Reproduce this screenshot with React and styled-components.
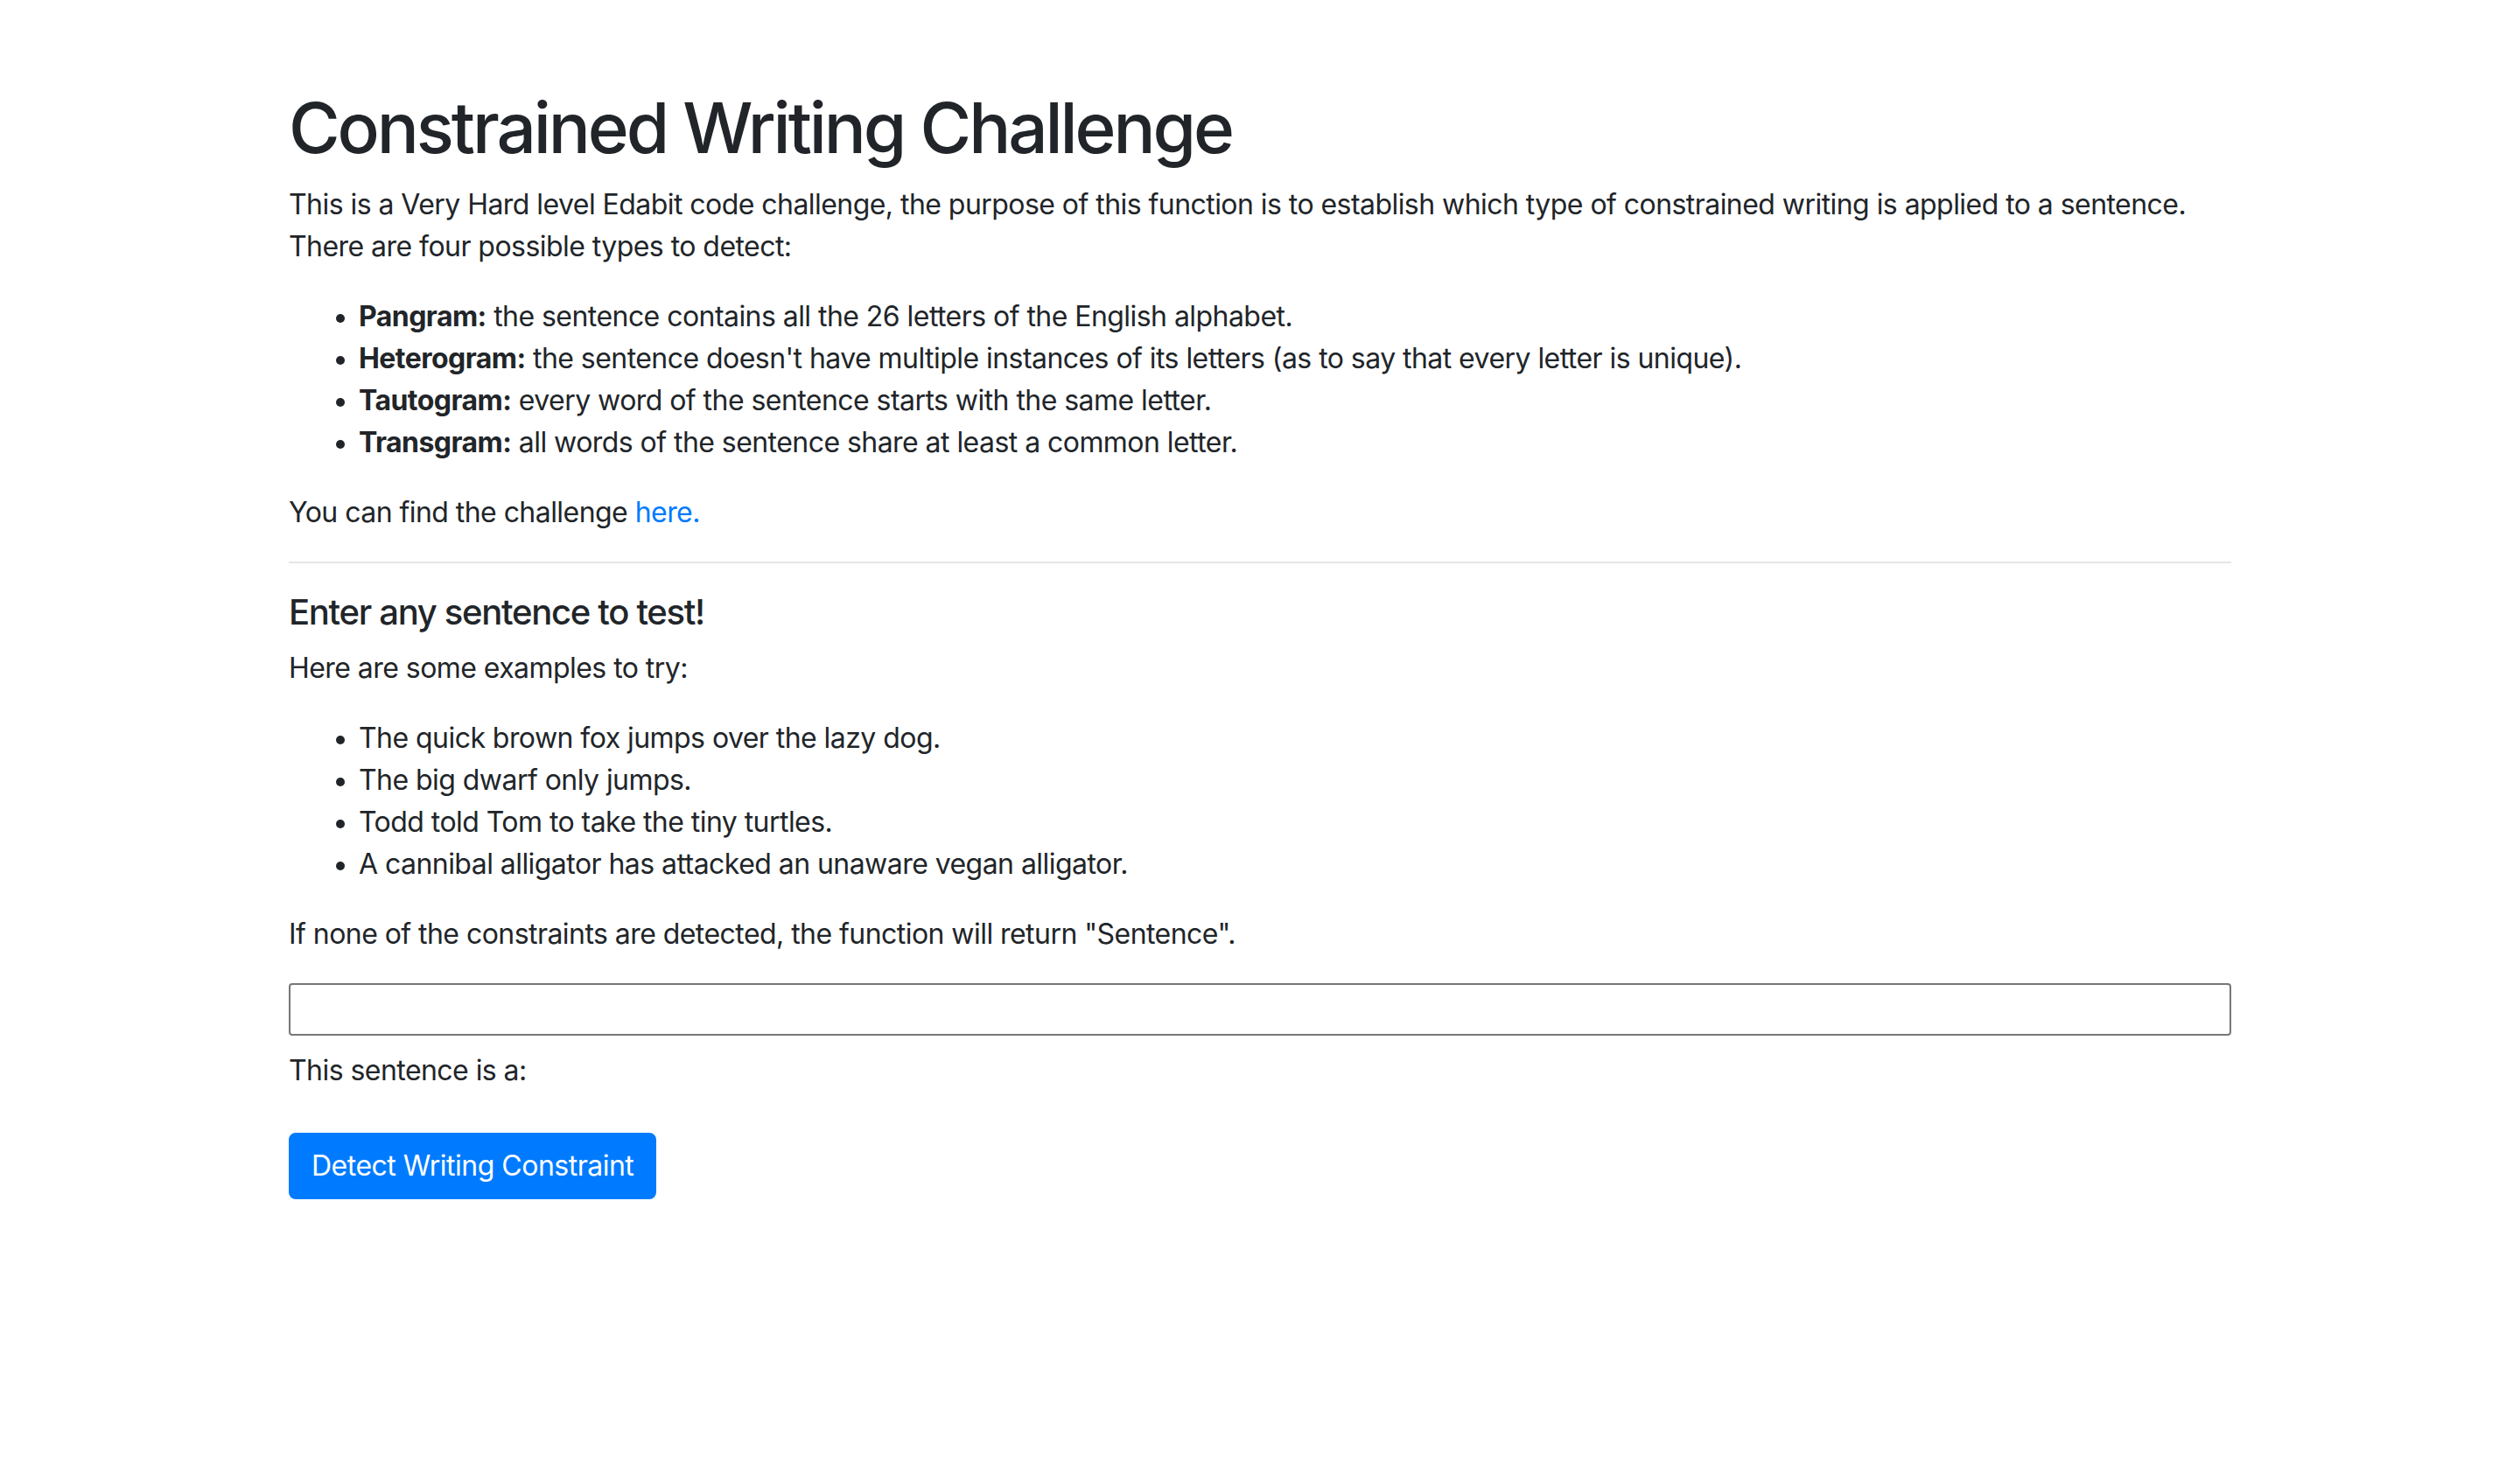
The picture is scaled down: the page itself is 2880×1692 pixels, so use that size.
import React, { useState } from 'react'
import styled, { createGlobalStyle } from 'styled-components'

const GlobalStyle = createGlobalStyle`
    html, body {
        margin: 0;
        padding: 0;
        background: #fff;
    }
    body {
        font-family: Inter, "Noto Sans", "Liberation Sans", sans-serif;
        font-size: 32px;
        line-height: 1.5;
        letter-spacing: -0.55px;
        color: #212529;
    }
`

const Container = styled.div`
    max-width: 2280px;
    margin: 0 auto;
    padding: 98px 30px 0;
    box-sizing: border-box;
`

const Title = styled.h1`
    font-size: 80px;
    font-weight: 500;
    line-height: 1.2;
    letter-spacing: -3.1px;
    margin: 0 0 16px;
`

const SubTitle = styled.h5`
    font-size: 40px;
    font-weight: 500;
    line-height: 1.2;
    letter-spacing: -1.3px;
    margin: 0 0 16px;
`

const Text = styled.p`
    margin: 0 0 ${p => p.$gap || 32}px;
`

const List = styled.ul`
    margin: 0 0 32px;
    padding-left: 80px;

    li::marker {
        font-family: "Liberation Sans", sans-serif;
    }

    strong {
        font-weight: 700;
    }
`

const Link = styled.a`
    color: #007bff;
    text-decoration: none;
`

const Divider = styled.hr`
    border: 0;
    border-top: 2px solid rgba(0, 0, 0, 0.1);
    margin: 32px 0;
`

const SentenceInput = styled.input`
    display: block;
    width: 100%;
    height: 60px;
    box-sizing: border-box;
    border: 2px solid #767676;
    border-radius: 4px;
    padding: 2px 6px;
    font-size: 26px;
    font-family: inherit;
    margin: 0 0 16px;
    outline: none;
`

const Button = styled.button`
    font-family: inherit;
    font-size: 32px;
    line-height: 1.5;
    font-weight: 400;
    letter-spacing: -0.5px;
    color: #fff;
    background-color: #007bff;
    border: 2px solid #007bff;
    border-radius: 8px;
    padding: 12px 24px;
    cursor: pointer;
`

const types = [
    ['Pangram:', 'the sentence contains all the 26 letters of the English alphabet.'],
    ['Heterogram:', "the sentence doesn't have multiple instances of its letters (as to say that every letter is unique)."],
    ['Tautogram:', 'every word of the sentence starts with the same letter.'],
    ['Transgram:', 'all words of the sentence share at least a common letter.'],
]

const examples = [
    'The quick brown fox jumps over the lazy dog.',
    'The big dwarf only jumps.',
    'Todd told Tom to take the tiny turtles.',
    'A cannibal alligator has attacked an unaware vegan alligator.',
]

const App = () => {
    const [sentence, setSentence] = useState('')
    const [result, setResult] = useState('')

  return (
        <>
            <GlobalStyle />
            <Container>
                <Title>Constrained Writing Challenge</Title>
                <Text>
                    This is a Very Hard level Edabit code challenge, the purpose of this function is to establish which type of constrained writing is applied to a sentence.<br />
                    There are four possible types to detect:
                </Text>
                <List>
                    {types.map(([name, desc]) => (
                        <li key={name}><strong>{name}</strong> {desc}</li>
                    ))}
                </List>
                <Text>You can find the challenge <Link href="#">here.</Link></Text>
                <Divider />
                <SubTitle>Enter any sentence to test!</SubTitle>
                <Text>Here are some examples to try:</Text>
                <List>
                    {examples.map(e => <li key={e}>{e}</li>)}
                </List>
                <Text>If none of the constraints are detected, the function will return "Sentence".</Text>
                <SentenceInput value={sentence} onChange={e => setSentence(e.target.value)} />
                <Text $gap={47}>This sentence is a: {result}</Text>
                <Button onClick={() => setResult(sentence ? 'Sentence' : '')}>Detect Writing Constraint</Button>
            </Container>
        </>
  )
}

export default App
